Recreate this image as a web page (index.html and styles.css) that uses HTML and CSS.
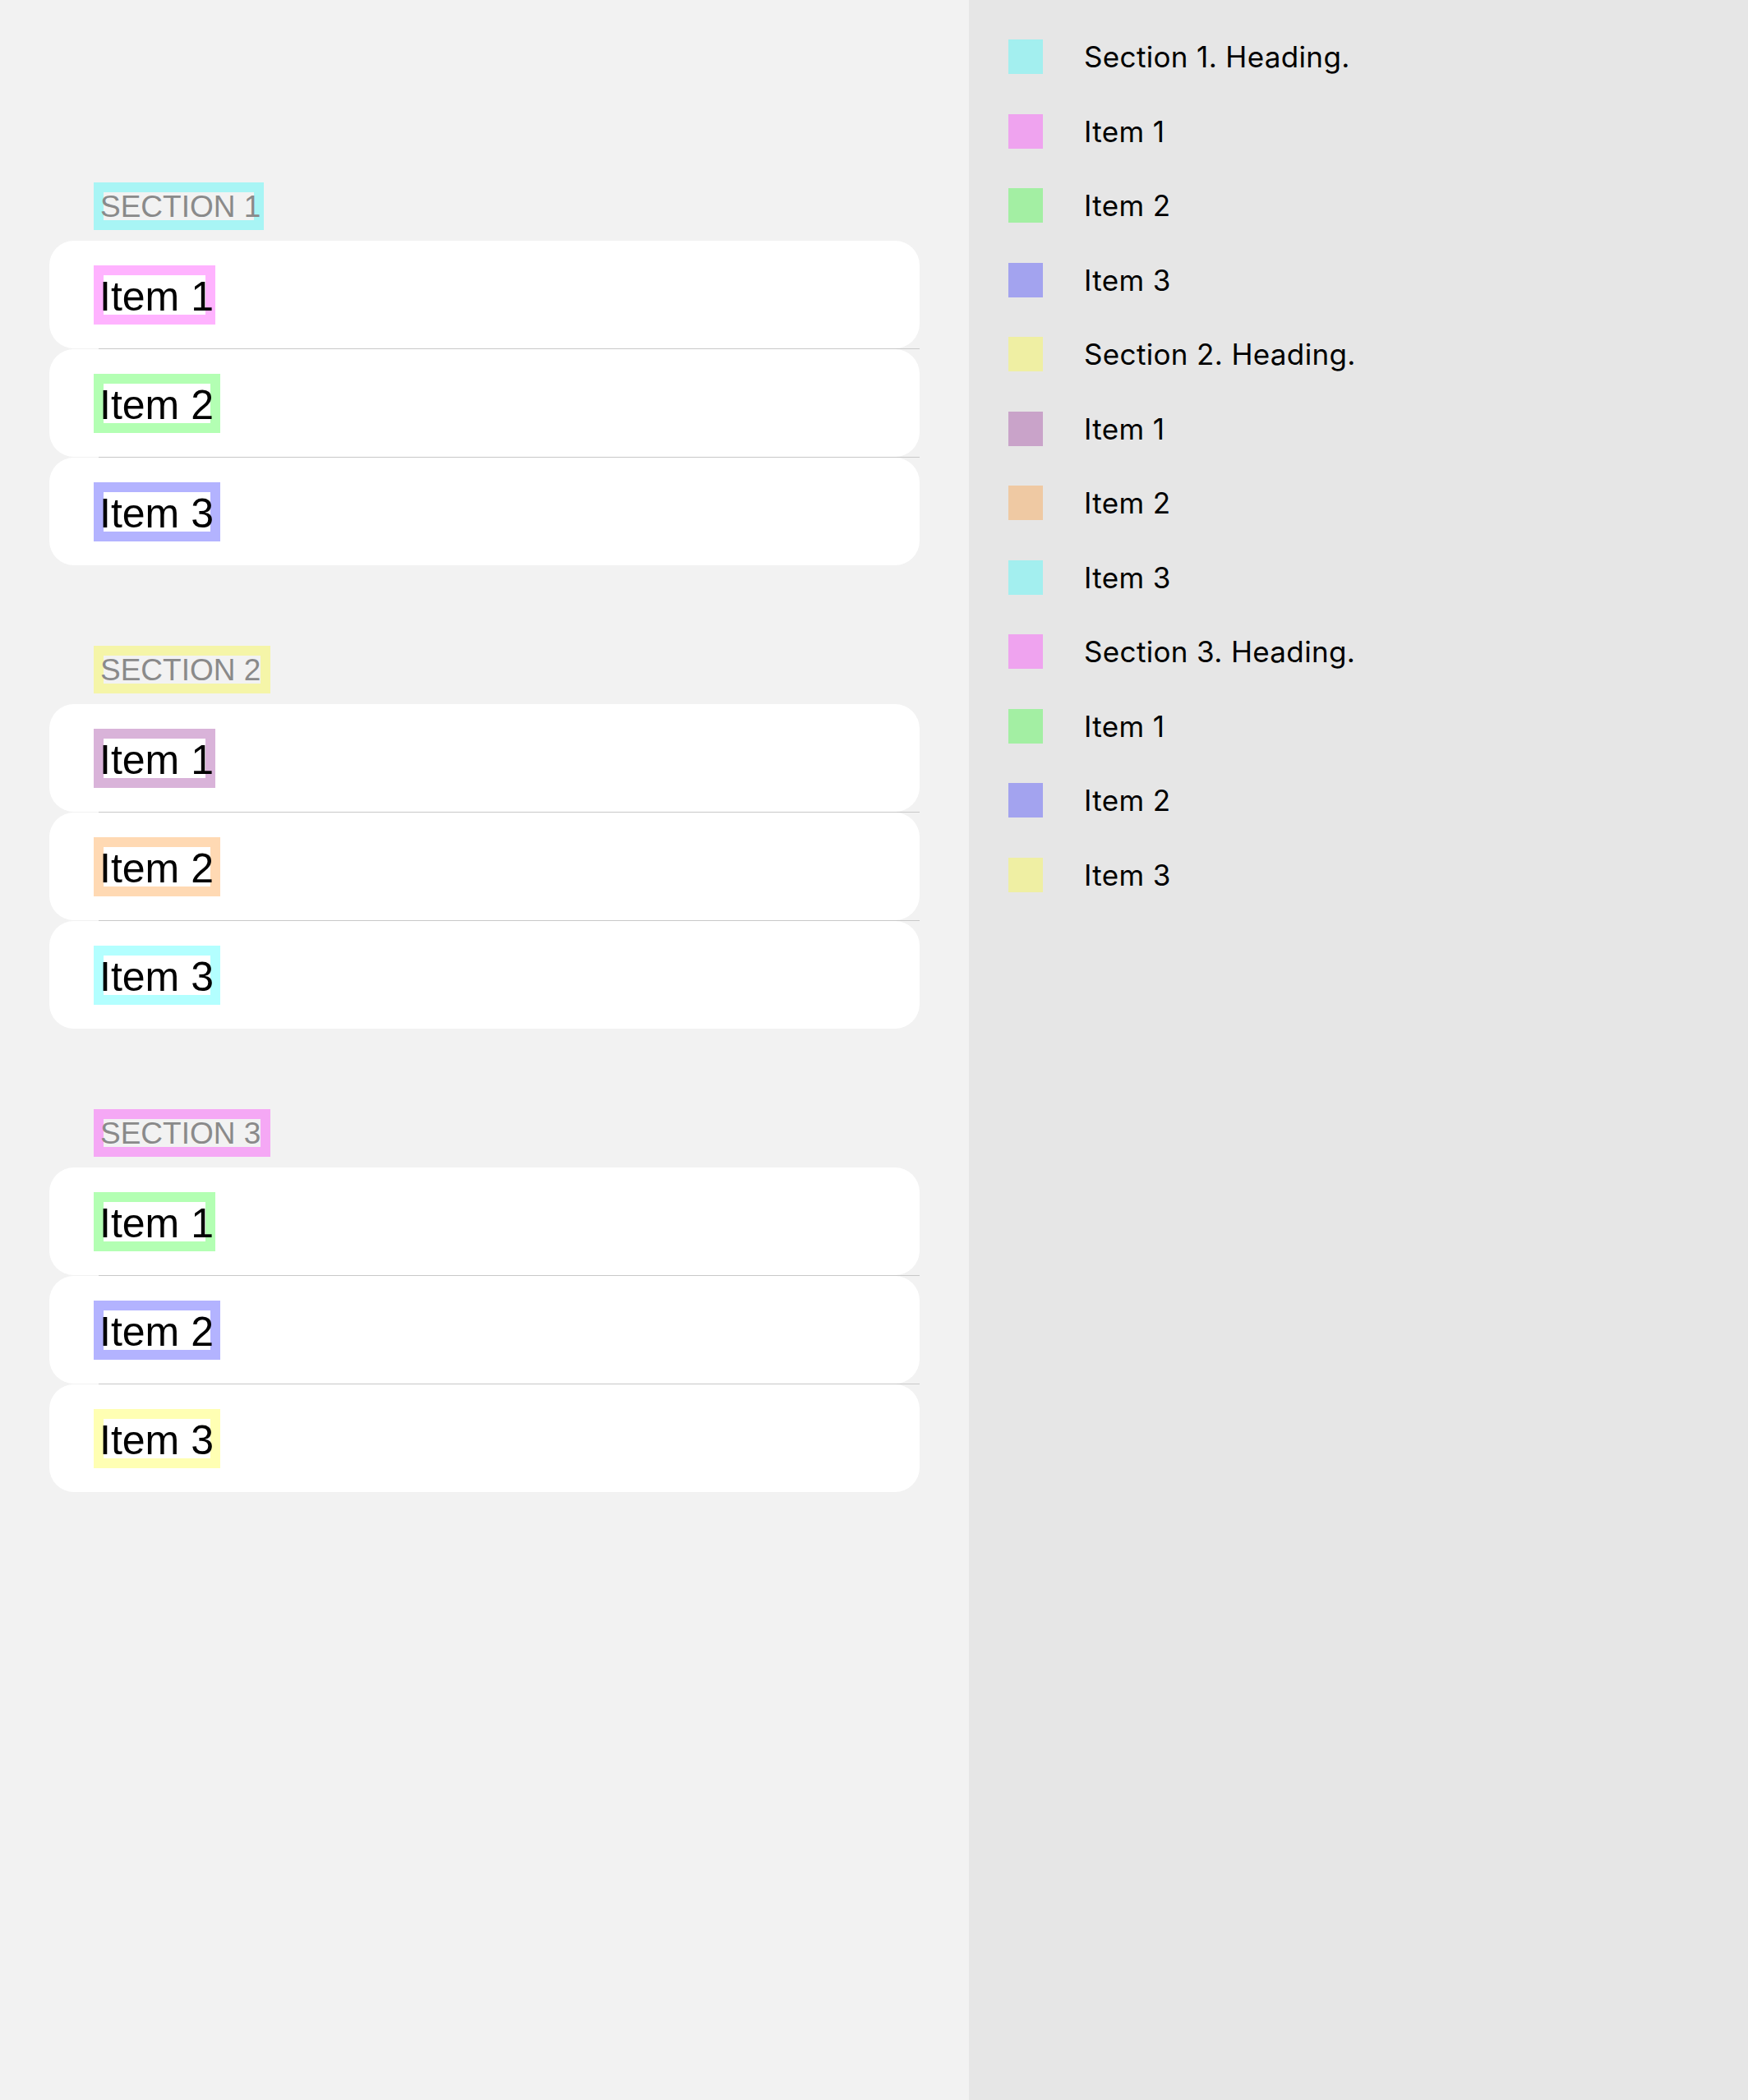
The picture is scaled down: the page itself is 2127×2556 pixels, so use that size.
FILE: index.html
```html
<!DOCTYPE html>
<html>
<head>
<meta charset="utf-8">
<link rel="stylesheet" href="styles.css">
</head>
<body>
<div class="app">
  <main class="list">
    <section class="group">
      <div class="group-head"><span class="hl hl-head h-cyan"><span class="hl-text">SECTION 1</span></span></div>
      <div class="rows">
        <div class="row"><span class="hl hl-item i-pink"><span class="hl-text">Item 1</span></span></div>
        <div class="sep"></div>
        <div class="row"><span class="hl hl-item wide i-green"><span class="hl-text">Item 2</span></span></div>
        <div class="sep"></div>
        <div class="row"><span class="hl hl-item wide i-blue"><span class="hl-text">Item 3</span></span></div>
      </div>
    </section>
    <section class="group">
      <div class="group-head"><span class="hl hl-head wide h-yellow"><span class="hl-text">SECTION 2</span></span></div>
      <div class="rows">
        <div class="row"><span class="hl hl-item i-mauve"><span class="hl-text">Item 1</span></span></div>
        <div class="sep"></div>
        <div class="row"><span class="hl hl-item wide i-peach"><span class="hl-text">Item 2</span></span></div>
        <div class="sep"></div>
        <div class="row"><span class="hl hl-item wide i-cyan"><span class="hl-text">Item 3</span></span></div>
      </div>
    </section>
    <section class="group">
      <div class="group-head"><span class="hl hl-head wide h-pink"><span class="hl-text">SECTION 3</span></span></div>
      <div class="rows">
        <div class="row"><span class="hl hl-item i-green"><span class="hl-text">Item 1</span></span></div>
        <div class="sep"></div>
        <div class="row"><span class="hl hl-item wide i-blue"><span class="hl-text">Item 2</span></span></div>
        <div class="sep"></div>
        <div class="row"><span class="hl hl-item wide i-yellow"><span class="hl-text">Item 3</span></span></div>
      </div>
    </section>
  </main>
  <aside class="legend">
    <div class="legend-row"><span class="swatch s-cyan"></span><span class="legend-label">Section 1. Heading.</span></div>
    <div class="legend-row"><span class="swatch s-pink"></span><span class="legend-label">Item 1</span></div>
    <div class="legend-row"><span class="swatch s-green"></span><span class="legend-label">Item 2</span></div>
    <div class="legend-row"><span class="swatch s-blue"></span><span class="legend-label">Item 3</span></div>
    <div class="legend-row"><span class="swatch s-yellow"></span><span class="legend-label">Section 2. Heading.</span></div>
    <div class="legend-row"><span class="swatch s-mauve"></span><span class="legend-label">Item 1</span></div>
    <div class="legend-row"><span class="swatch s-peach"></span><span class="legend-label">Item 2</span></div>
    <div class="legend-row"><span class="swatch s-cyan"></span><span class="legend-label">Item 3</span></div>
    <div class="legend-row"><span class="swatch s-pink"></span><span class="legend-label">Section 3. Heading.</span></div>
    <div class="legend-row"><span class="swatch s-green"></span><span class="legend-label">Item 1</span></div>
    <div class="legend-row"><span class="swatch s-blue"></span><span class="legend-label">Item 2</span></div>
    <div class="legend-row"><span class="swatch s-yellow"></span><span class="legend-label">Item 3</span></div>
  </aside>
</div>
</body>
</html>
```
FILE: styles.css
```css
html, body {
  margin: 0;
  padding: 0;
}
body {
  width: 2127px;
  height: 2556px;
  overflow: hidden;
  font-family: "Liberation Sans", Arial, sans-serif;
}
.app {
  display: flex;
  height: 2556px;
}
.list {
  width: 1179px;
  flex: none;
  box-sizing: border-box;
  background: #f2f2f2;
  padding: 222px 60px 0 60px;
}
.group {
  display: flex;
  flex-direction: column;
}
.group + .group {
  margin-top: 98px;
}
.group-head {
  display: flex;
  padding-left: 54px;
  margin-bottom: 13px;
}
.rows {
  display: flex;
  flex-direction: column;
}
.row {
  height: 131px;
  background: #ffffff;
  border-radius: 30px;
  display: flex;
  align-items: center;
  padding-left: 54px;
}
.sep {
  height: 1px;
  background: #c8c8c8;
  margin-left: 60px;
}
.hl {
  display: inline-flex;
  border: 12px solid transparent;
}
.hl-text {
  display: block;
  white-space: nowrap;
}
.hl-head .hl-text {
  height: 34px;
  line-height: 36px;
  font-size: 37px;
  color: #8a8a8a;
  margin: 0 -8px 0 -4px;
}
.hl-head.wide .hl-text {
  margin-right: 0;
}
.hl-item .hl-text {
  height: 48px;
  line-height: 52px;
  font-size: 50px;
  color: #000000;
  margin: 0 -10px 0 -5px;
}
.hl-item.wide .hl-text {
  margin-right: -4px;
}
.h-cyan { border-color: #a8f5f5; }
.h-yellow { border-color: #f5f5a8; }
.h-pink { border-color: #f5a8f5; }
.i-pink { border-color: #ffb3ff; }
.i-green { border-color: #b3ffb3; }
.i-blue { border-color: #b3b3ff; }
.i-mauve { border-color: #d9b3d9; }
.i-peach { border-color: #ffd9b3; }
.i-cyan { border-color: #b3ffff; }
.i-yellow { border-color: #ffffb3; }

.legend {
  flex: 1;
  background: #e6e6e6;
  box-sizing: border-box;
  padding: 48px 0 0 48px;
  display: flex;
  flex-direction: column;
  gap: 48.5px;
}
.legend-row {
  display: flex;
  align-items: center;
  height: 42px;
}
.swatch {
  width: 42px;
  height: 42px;
  flex: none;
  margin-right: 50px;
}
.legend-label {
  font-family: Inter, "Noto Sans", sans-serif;
  font-size: 35px;
  letter-spacing: 0.35px;
  color: #000000;
  white-space: nowrap;
}
.s-cyan { background: #a3efef; }
.s-pink { background: #efa3ef; }
.s-green { background: #a3efa3; }
.s-blue { background: #a3a3ef; }
.s-yellow { background: #efefa3; }
.s-mauve { background: #c9a3c9; }
.s-peach { background: #efc9a3; }
```
